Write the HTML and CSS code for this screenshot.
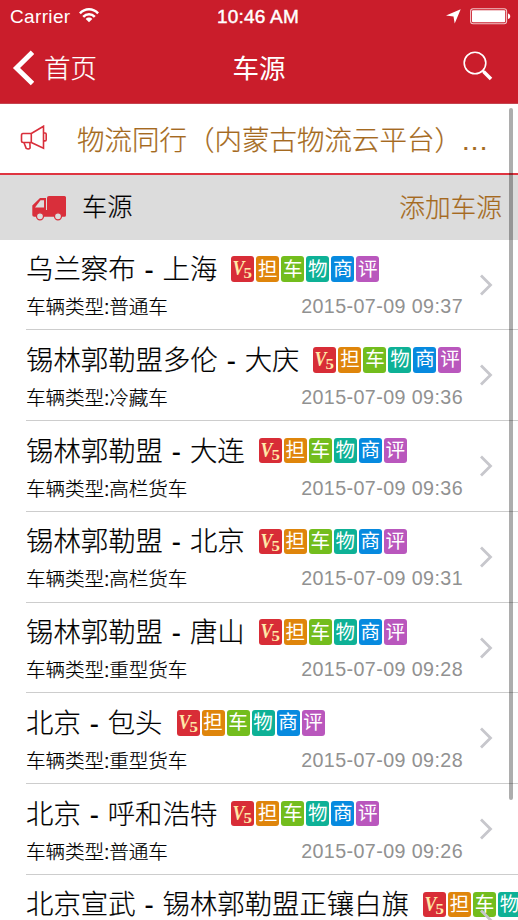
FILE: index.html
```html
<!DOCTYPE html>
<html lang="zh-CN">
<head>
<meta charset="utf-8">
<title>车源</title>
<link rel="stylesheet" href="styles.css">
</head>
<body>
<div class="screen">
  <header class="header">
    <div class="status">
      <div class="status-left">Carrier
        <svg class="wifi" width="20" height="15" viewBox="0 0 20 15" fill="none" stroke="#fff" stroke-width="2.5"><path d="M.9 5.4C6-.1 14-.1 19.1 5.4M4.2 8.8c3.2-3.4 8.4-3.4 11.6 0"/><path d="M10 14.2 6.7 10.9c1.8-1.8 4.800-1.800 6.600 0z" fill="#fff" stroke="none"/></svg>
      </div>
      <div class="status-time">10:46 AM</div>
      <div class="status-right">
        <svg width="15" height="15" viewBox="0 0 15 15"><path d="M0 6.600 14.700.2 8.700 14.600 7.500 7.500z" fill="#fff"/></svg>
        <svg width="41" height="17" viewBox="0 0 41 17"><rect x=".6" y=".8" width="36" height="15" rx="2.500" fill="none" stroke="#fff" stroke-opacity=".75" stroke-width="1.100"/><rect x="2" y="2.300" width="33.200" height="12" rx="1" fill="#fff"/><path d="M38 5.500c3 .6 3 5 0 5.600z" fill="#fff"/></svg>
      </div>
    </div>
    <nav class="nav">
      <div class="back"><svg width="22" height="36" viewBox="0 0 22 36"><path d="M20.500 2.200 4.500 18l16 15.500" fill="none" stroke="#fff" stroke-width="5"/></svg><span>首页</span></div>
      <div class="nav-title">车源</div>
      <svg class="search" width="30" height="30" viewBox="0 0 30 30" fill="none" stroke="#fff"><circle cx="12" cy="12" r="10.800" stroke-width="1.600"/><path d="m19.500 19.500 1.500 1.500" stroke-width="2"/><path d="m20.500 20.500 7.500 7.500" stroke-width="3.500"/></svg>
    </nav>
  </header>
  <section class="notice">
    <svg class="horn" width="28" height="26" viewBox="0 0 28 26" fill="none" stroke="#d92f3b" stroke-width="1.600"><path d="M3 8.500h8.300v9H3.200q-1.700 0-1.700-1.700v-5.300q0-2 1.500-2zM11.300 8.500 23.500 1.200v22.100l-12.200-5.800M23.500 8h1.600q1.100 0 1.100 1.200v5.500q0 1.200-1.100 1.200h-1.600M4 17.700l2.200 5.700q2.400 1.400 3.900-.4l-.2-5.300"/></svg>
    <p class="notice-text">物流同行（内蒙古物流云平台）<span class="more">...</span></p>
  </section>
  <section class="section-bar">
    <svg class="truck" width="35" height="26" viewBox="0 0 35 26"><path d="M17 1h15.500q1.500 0 1.500 1.500v17.700q0 1.600-1.600 1.600H2.200Q.3 21.800.3 20V10.500L8 3h6v12h1V3q0-2 2-2z" fill="#d92f3b"/><path d="M3 12.500 8.500 5.200h3.500v7.300z" fill="#dcdcdc"/><g fill="#dcdcdc" stroke="#d92f3b" stroke-width="1.300"><circle cx="8" cy="21.300" r="3.500"/><circle cx="26" cy="21.300" r="3.500"/></g></svg>
    <h2>车源</h2>
    <a class="add">添加车源</a>
  </section>
  <main class="list" id="list"></main>
  <div class="scrollbar"></div>
</div>
<script src="list.js"></script>
</body>
</html>
```
FILE: styles.css
```css
* { box-sizing: border-box; }
body { margin: 0; background: #fff; overflow: hidden; font-family: "Liberation Sans", "Noto Sans CJK SC", sans-serif; font-weight: 300; }
svg { display: block; flex: none; }
h2, h3, p { margin: 0; font-weight: 300; }
.screen { position: relative; width: 518px; height: 920px; overflow: hidden; color: #000; }
.header { height: 104px; background: #ca1d2b; color: #fff; border-bottom: 1px solid #c4444f; }
.status { display: grid; grid-template-columns: 1fr auto 1fr; align-items: center; height: 33px; padding: 1px 9px 0 7px; font-size: 19px; }
.status-left { display: flex; align-items: center; gap: 9px; padding-left: 3px; letter-spacing: .35px; }
.wifi { margin-top: -3px; margin-left: -1px; }
.status-time { font-weight: 500; letter-spacing: .2px; -webkit-text-stroke: .45px #fff; }
.status-right { display: flex; align-items: center; justify-content: flex-end; gap: 9px; margin: -1px -2px 0 0; }
.nav { display: grid; grid-template-columns: 1fr auto 1fr; align-items: center; height: 68px; padding: 0 25px; font-size: 26.500px; }
.back { display: flex; align-items: center; gap: 10px; margin: 2px 0 0 -13px; -webkit-text-stroke: .2px #fff; }
.back span { margin-top: -3px; }
.nav-title { margin-top: -2px; font-weight: 400; }
.search { justify-self: end; margin-top: -2px; }
.notice { display: flex; align-items: center; height: 71px; padding-left: 20px; border-bottom: 2px solid #df3541; color: #a56a20; }
.horn { margin-top: -2px; }
.notice-text { margin: -2px 0 0 29px; font-size: 27.500px; white-space: nowrap; -webkit-text-stroke: .2px #a56a20; }
.more { margin-left: 0; letter-spacing: 1.200px; }
.section-bar { display: flex; align-items: center; height: 64.500px; padding: 0 16px 0 32px; background: #dcdcdc; }
.section-bar h2 { margin: -4px 0 0 15px; font-size: 25.200px; -webkit-text-stroke: .2px #000; }
.truck { margin-top: 2px; }
.add { margin: -3px 0 0 auto; font-size: 25.700px; color: #a56a20; -webkit-text-stroke: .2px #a56a20; }
.row { position: relative; height: 90.750px; margin-left: 26px; padding-top: 9px; border-bottom: 1px solid #cdcdcd; }
.route { display: flex; align-items: center; gap: 14px; height: 42px; white-space: nowrap; }
.route h3 { font-size: 27.400px; line-height: 43px; word-spacing: 1.300px; -webkit-text-stroke: .2px #000; }
.badges { display: flex; gap: 2px; margin-top: -1px; }
.badge { display: flex; align-items: center; justify-content: center; flex: none; width: 23px; height: 25.500px; border-radius: 3px; color: #fff; font-size: 19.500px; font-weight: 400; line-height: 25px; }
.vip { background: #d82d37; }
.vip svg { width: 23px; height: 25.500px; }
.vip text { fill: #ffe9a8; font-family: "Liberation Serif", serif; font-weight: 700; }
.guarantee { background: #df850b; }
.vehicle { background: #73bd1d; }
.goods { background: #0eb196; }
.trade { background: #078adf; }
.review { background: #b957bd; }
.meta { display: flex; justify-content: space-between; align-items: center; height: 30px; padding-right: 55px; font-size: 19.600px; }
.meta span { letter-spacing: -.1px; -webkit-text-stroke: .2px #000; }
.meta time { margin-top: 2px; color: #919191; font-size: 19.700px; letter-spacing: .4px; }
.chevron { position: absolute; right: 25.500px; top: 34px; }
.scrollbar { position: absolute; right: 5px; top: 108px; width: 4px; height: 692px; border-radius: 2px; background: rgba(0, 0, 0, .32); }
```
FILE: list.js
```javascript
const rows = [
  ["乌兰察布 - 上海", "普通车", "09:37"],
  ["锡林郭勒盟多伦 - 大庆", "冷藏车", "09:36"],
  ["锡林郭勒盟 - 大连", "高栏货车", "09:36"],
  ["锡林郭勒盟 - 北京", "高栏货车", "09:31"],
  ["锡林郭勒盟 - 唐山", "重型货车", "09:28"],
  ["北京 - 包头", "重型货车", "09:28"],
  ["北京 - 呼和浩特", "普通车", "09:26"],
  ["北京宣武 - 锡林郭勒盟正镶白旗", "", ""]
];

const badges = `<div class="badges">
  <span class="badge vip"><svg viewBox="0 0 23.1 25.5"><text x="1.5" y="19" font-size="21" font-style="italic" textLength="12" lengthAdjust="spacingAndGlyphs">V</text><text x="12.500" y="22" font-size="14" textLength="8.500" lengthAdjust="spacingAndGlyphs">5</text></svg></span>
  <span class="badge guarantee">担</span>
  <span class="badge vehicle">车</span>
  <span class="badge goods">物</span>
  <span class="badge trade">商</span>
  <span class="badge review">评</span>
</div>`;

document.getElementById("list").innerHTML = rows.map(([route, type, time]) => `
  <article class="row">
    <div class="route"><h3>${route}</h3>${badges}</div>
    ${type ? `<div class="meta"><span>车辆类型:${type}</span><time>2015-07-09 ${time}</time></div>` : ""}
    <svg class="chevron" width="14" height="22" viewBox="0 0 14 22"><path d="m2 1.500 9.500 9.500L2 20.500" fill="none" stroke="#c7c7cc" stroke-width="2.800"/></svg>
  </article>`).join("");
```
